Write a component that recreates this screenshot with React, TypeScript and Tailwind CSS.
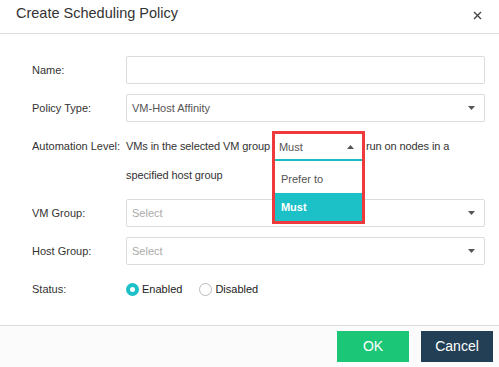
import React from "react";

const Caret = ({ up = false }: { up?: boolean }) => (
  <svg width="7" height="4" viewBox="0 0 7 4" className="block">
    {up ? <path d="M0 4 L3.5 0 L7 4 Z" fill="#555" /> : <path d="M0 0 L7 0 L3.5 4 Z" fill="#555" />}
  </svg>
);

export default function App() {
  return (
    <div className="w-[499px] h-[367px] bg-white flex flex-col text-[#333] overflow-hidden" style={{ fontFamily: '"Liberation Sans", Arial, sans-serif' }}>
      {/* Header */}
      <div className="h-[34px] border-b border-[#dcdcdc] flex items-start justify-between pl-[16px] pr-[17px] shrink-0">
        <div className="text-[14.5px] leading-[20px] pt-[3px] text-[#333]">Create Scheduling Policy</div>
        <svg width="9" height="9" viewBox="0 0 9 9" className="mt-[11px]">
          <path d="M1 1 L8 8 M8 1 L1 8" stroke="#444" strokeWidth="1.4" />
        </svg>
      </div>

      {/* Body */}
      <div className="flex-1 pl-[32px] pr-[14px] pt-[22px] text-[11px]">
        <div className="flex items-center h-[28px]">
          <div className="w-[94px] shrink-0">Name:</div>
          <div className="flex-1 h-[28px] border border-[#dcdcdc] rounded-[2px]" />
        </div>
        <div className="flex items-center h-[28px] mt-[10px]">
          <div className="w-[94px] shrink-0">Policy Type:</div>
          <div className="flex-1 h-[28px] border border-[#dcdcdc] rounded-[2px] flex items-center justify-between pl-[5px] pr-[9px] text-[#555]">
            <span>VM-Host Affinity</span>
            <Caret />
          </div>
        </div>
        <div className="flex mt-[10px]">
          <div className="w-[94px] shrink-0 leading-[29px] whitespace-nowrap">Automation Level:</div>
          <div className="flex-1 leading-[29px] tracking-[-0.1px]">
            VMs in the selected VM group
            <span className="relative inline-block align-top w-[87px] h-[29px] ml-[5px] mr-[1px] tracking-normal">
              <span className="absolute left-0 right-0 top-[2px] h-[27px] border-b-[2px] border-[#1cc0c7] flex items-center justify-between pl-[4px] pr-[8px] text-[#555] leading-[16px]">
                <span>Must</span>
                <Caret up />
              </span>
              <span className="absolute left-0 right-0 top-[29px] h-[60px] bg-white shadow-[0_1px_3px_rgba(0,0,0,0.15)] pt-[4px] z-10 flex flex-col leading-[16px]">
                <span className="h-[28px] flex items-center pl-[6px] text-[#555]">Prefer to</span>
                <span className="h-[28px] flex items-center pl-[6px] bg-[#1cc0c7] text-white font-bold">Must</span>
              </span>
              <span className="absolute left-[-3px] right-[-3px] top-[-1px] h-[93px] border-[3px] border-[#ee3a3c] z-20 pointer-events-none" />
            </span>{" "}
            run on nodes in a specified host group
          </div>
        </div>
        <div className="flex items-center h-[28px] mt-[9px]">
          <div className="w-[94px] shrink-0">VM Group:</div>
          <div className="flex-1 h-[28px] border border-[#dcdcdc] rounded-[2px] flex items-center justify-between pl-[5px] pr-[9px] text-[#aaa]">
            <span>Select</span>
            <Caret />
          </div>
        </div>
        <div className="flex items-center h-[28px] mt-[10px]">
          <div className="w-[94px] shrink-0">Host Group:</div>
          <div className="flex-1 h-[28px] border border-[#dcdcdc] rounded-[2px] flex items-center justify-between pl-[5px] pr-[9px] text-[#aaa]">
            <span>Select</span>
            <Caret />
          </div>
        </div>
        <div className="flex items-center h-[28px] mt-[10px]">
          <div className="w-[94px] shrink-0">Status:</div>
          <div className="flex items-center">
            <span className="w-[13px] h-[13px] rounded-full border-[4px] border-[#1cc0c7] bg-white" />
            <span className="ml-[3px] text-[#222]">Enabled</span>
            <span className="w-[13px] h-[13px] rounded-full border border-[#bbb] bg-white ml-[17px]" />
            <span className="ml-[3px] text-[#222]">Disabled</span>
          </div>
        </div>
      </div>

      {/* Footer */}
      <div className="h-[42px] shrink-0 border-t border-[#dcdcdc] bg-[#fbfbfb] flex items-center justify-end gap-[12px] pr-[6px]">
        <button className="w-[72px] h-[31px] bg-[#1cc677] text-white text-[14px]">OK</button>
        <button className="w-[72px] h-[31px] bg-[#233f55] text-white text-[14px]">Cancel</button>
      </div>
    </div>
  );
}
